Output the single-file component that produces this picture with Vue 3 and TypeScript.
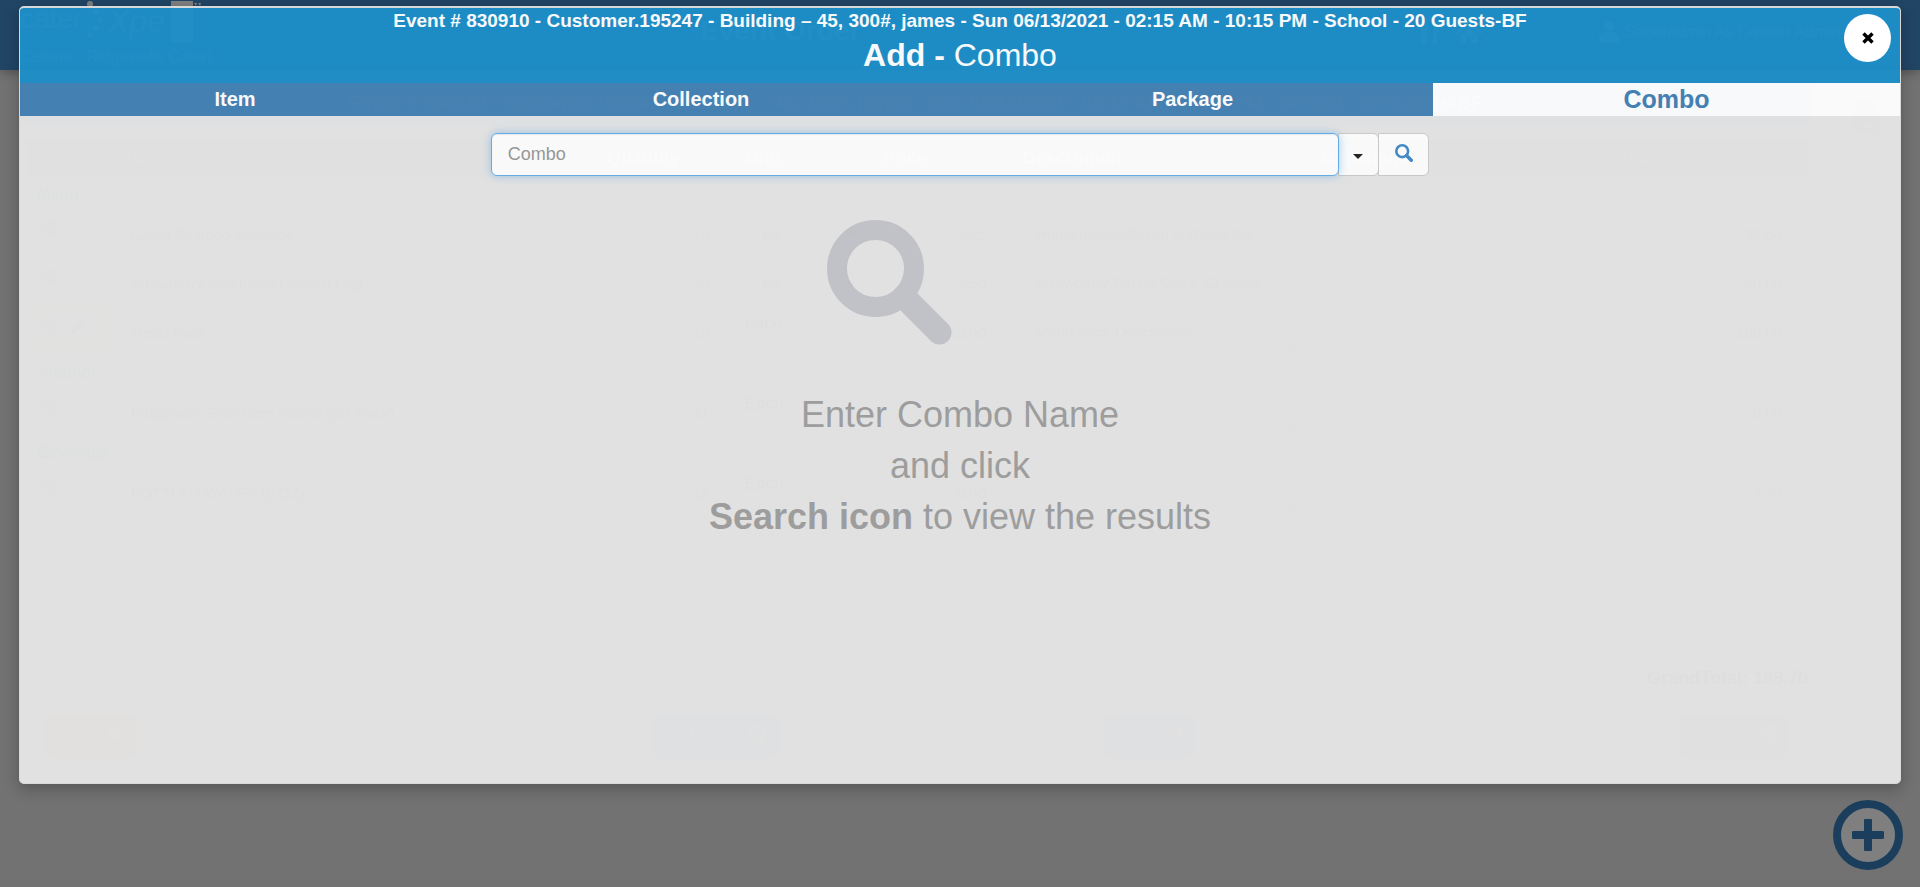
<script setup lang="ts">
import { ref } from 'vue'

interface Line {
  name: string
  qty: string
  unit: string
  select: boolean
  price: string
  description: string
  total: string
  editable: boolean
}

interface Category {
  title: string
  lines: Line[]
}

const eventTitle =
  'Event # 830910 - Customer.195247 - Building – 45, 300#, james - Sun 06/13/2021 - 02:15 AM - 10:15 PM - School - 20 Guests-BF'

const columns = ['', 'Name', 'Quantity', 'Unit', 'Price', 'Description', 'Directions', 'Total']

const categories: Category[] = [
  {
    title: 'Menu',
    lines: [
      { name: 'Cajun Seafood Sausage', qty: '10', unit: 'ea', select: true, price: '3.25', description: 'Housemade Shrimp and Scallop', total: '32.50', editable: false },
      { name: 'Strawberry Shortcake Dessert Cup', qty: '20', unit: 'ea', select: true, price: '2.50', description: 'Strawberry Panna Cotta, Crunchy', total: '50.00', editable: false },
      { name: 'Menu Pack', qty: '10', unit: 'each', select: false, price: '10.00', description: 'Menu Pack Description', total: '100.00', editable: true },
    ],
  },
  {
    title: 'Alcohol',
    lines: [
      { name: 'Ridgewells Eats Beer Promo (Six Pack)', qty: '11', unit: 'Each', select: false, price: '0.00', description: '', total: '0.00', editable: false },
    ],
  },
  {
    title: 'Beverage',
    lines: [
      { name: 'BOTTLED WATER (8 OZ)', qty: '12', unit: 'Each', select: false, price: '0.60', description: '', total: '7.20', editable: false },
    ],
  },
]

const tabs = ['Item', 'Collection', 'Package', 'Combo']
const activeTab = ref('Combo')
const query = ref('')
</script>

<template>
  <div class="screen">
    <div class="page">
      <header class="navbar">
        <div class="brand">
          <div class="logo">
            <span class="logo-cater">cater</span>
            <svg class="logo-dots" width="26" height="38" viewBox="0 0 26 38">
              <circle cx="8" cy="4" r="3" /><circle cx="14" cy="12" r="3" /><circle cx="18" cy="20" r="3" />
              <circle cx="14" cy="28" r="3" /><circle cx="8" cy="35" r="3" />
            </svg>
            <span class="logo-xpert">Xpe</span>
            <svg class="logo-card" width="32" height="42" viewBox="0 0 32 42">
              <rect y="1" width="22" height="41" /><path d="M23 3h3l-1 3zM27 3h3l-1 3z" />
            </svg>
          </div>
          <div class="caterer">Caterer : Ridgewells Cateri...</div>
        </div>
        <div class="nav-title">Event Order</div>
        <div class="nav-icons">
          <svg width="24" height="26" viewBox="0 0 24 26"><path d="M3 1h2v7h1V1h2v7h1V1h2v9l-2 2v13H5V12l-2-2zM16 1c4 1 6 5 6 12h-2v12h-4z" /></svg>
          <svg width="28" height="26" viewBox="0 0 28 26"><path d="M14 2 0 14l2 2L14 6l12 10 2-2-5-4V3h-3v4zM5 16v8h7v-6h4v6h7v-8l-9-8z" /></svg>
        </div>
        <div class="user">
          <svg width="20" height="22" viewBox="0 0 20 22"><circle cx="10" cy="6" r="5" /><path d="M0 22v-5q1-4 6-5h8q5 1 6 5v5z" /></svg>
          <span>Superadmin As Caterer Admin</span>
        </div>
      </header>

      <main class="order">
        <div class="order-head">
          <div class="order-title">{{ eventTitle }}</div>
          <button class="print" type="button" aria-label="Print">
            <svg width="30" height="30" viewBox="0 0 30 30"><path d="M4 0h18l4 4v8H4zM0 12h30v12h-4v6H4v-6H0zM8 20v6h14v-6z" fill="#aaa" fill-rule="evenodd" /></svg>
          </button>
        </div>

        <table class="lines">
          <colgroup>
            <col class="c-act" /><col class="c-name" /><col class="c-qty" /><col class="c-unit" />
            <col class="c-price" /><col class="c-desc" /><col class="c-desc" /><col class="c-total" />
          </colgroup>
          <thead>
            <tr><th v-for="c in columns" :key="c" scope="col">{{ c }}</th></tr>
          </thead>
          <tbody v-for="cat in categories" :key="cat.title">
            <tr class="category"><th colspan="8">{{ cat.title }}</th></tr>
            <tr v-for="line in cat.lines" :key="line.name" class="line">
              <td :class="{ marked: line.editable }">
                <div class="actions">
                  <button type="button" :aria-label="'Delete ' + line.name">
                    <svg width="14" height="16" viewBox="0 0 14 16" fill="none" stroke="#777"><path d="M0 3h14M4 3V1h6v2M2 4v11h10V4M5 6v7M7 6v7M9 6v7" /></svg>
                  </button>
                  <button v-if="line.editable" type="button" :aria-label="'Edit ' + line.name">
                    <svg width="16" height="16" viewBox="0 0 16 16"><path d="M0 16l1-5 9-9 4 4-9 9zM11 1l1-1h1l3 3v1l-1 1z" fill="#888" /></svg>
                  </button>
                </div>
              </td>
              <td><input type="text" :value="line.name" :aria-label="line.name + ' name'" /></td>
              <td><input class="num" type="text" :value="line.qty" :aria-label="line.name + ' quantity'" /></td>
              <td>
                <select v-if="line.select" :aria-label="line.name + ' unit'"><option>{{ line.unit }}</option></select>
                <span v-else class="unit">{{ line.unit }}</span>
              </td>
              <td><input class="num" type="text" :value="line.price" :aria-label="line.name + ' price'" /></td>
              <td><textarea rows="1" :value="line.description" :aria-label="line.name + ' description'"></textarea></td>
              <td><textarea rows="1" :aria-label="line.name + ' directions'"></textarea></td>
              <td><input class="num" type="text" :value="line.total" :aria-label="line.name + ' total'" /></td>
            </tr>
          </tbody>
        </table>

        <div class="grand">GrandTotal: 189.70</div>

        <div class="order-actions">
          <button class="btn close-btn" type="button">Close
            <svg width="16" height="16" viewBox="0 0 16 16"><path d="M3 0 8 5l5-5 3 3-5 5 5 5-3 3-5-5-5 5-3-3 5-5-5-5z" /></svg>
          </button>
          <button class="btn blue-btn" type="button">Add Items
            <svg width="18" height="18" viewBox="0 0 18 18"><path d="M9 0a9 9 0 1 0 0 18A9 9 0 0 0 9 0zM7 4h4v3h3v4h-3v3H7v-3H4V7h3z" fill-rule="evenodd" /></svg>
          </button>
          <button class="btn blue-btn" type="button">Save
            <svg width="18" height="18" viewBox="0 0 18 18"><path d="M18 0v18l-6-4-4 4-1-6-7-1zM15 4 8 12l2 2z" fill-rule="evenodd" /></svg>
          </button>
          <button class="btn green-btn" type="button">Finalize
            <svg width="18" height="18" viewBox="0 0 18 18"><path d="M9 0a9 9 0 1 0 0 18A9 9 0 0 0 9 0zM4 9l2-2 2 2 4-4 2 2-6 6z" fill-rule="evenodd" /></svg>
          </button>
        </div>
      </main>

      <button class="fab" type="button" aria-label="Add">
        <svg width="70" height="70" viewBox="0 0 70 70">
          <circle cx="35" cy="35" r="31" fill="#fff" stroke="#347cb8" stroke-width="8" />
          <path d="M32 19h6q1 0 1 1v11h10q2 0 2 1v6q0 1-2 1H39v11q0 1-1 1h-6q-1 0-1-1V39H20q-1 0-1-1v-6q0-1 1-1h11V20q0-1 1-1z" fill="#347cb8" />
        </svg>
      </button>
    </div>

    <div class="backdrop">
      <section class="dialog" role="dialog" aria-labelledby="dialog-title">
        <div class="content">
          <header class="dialog-head">
            <div class="dialog-event">{{ eventTitle }}</div>
            <h1 id="dialog-title"><strong>Add -</strong> Combo</h1>
          </header>
          <nav class="tabs" role="tablist">
            <button
              v-for="tab in tabs"
              :key="tab"
              type="button"
              role="tab"
              :aria-selected="tab === activeTab"
              :class="['tab', { active: tab === activeTab }]"
              @click="activeTab = tab"
            >{{ tab }}</button>
          </nav>
          <div class="dialog-body">
            <form class="search" @submit.prevent>
              <input v-model="query" class="search-input" type="text" placeholder="Combo" aria-label="Combo" />
              <button class="addon caret" type="button" aria-label="Search options">
                <svg width="10" height="5" viewBox="0 0 10 5"><path d="M0 0h10L5 5z" fill="#222" /></svg>
              </button>
              <button class="addon find" type="submit" aria-label="Search">
                <svg width="18" height="18" viewBox="0 0 125 125" fill="none" stroke="#428bca">
                  <circle cx="50" cy="50" r="41" stroke-width="18" /><path d="M80 80 113 113" stroke-width="24" stroke-linecap="round" />
                </svg>
              </button>
            </form>
            <div class="hint">
              <svg width="125" height="125" viewBox="0 0 125 125" fill="none" stroke="#c4c5ca">
                <circle cx="48.5" cy="48.5" r="38.5" stroke-width="20" /><path d="M77 77 112.500 112.500" stroke-width="24" stroke-linecap="round" />
              </svg>
              <p>Enter Combo Name<br />and click<br /><strong>Search icon</strong> to view the results</p>
            </div>
          </div>
        </div>
        <button class="dismiss" type="button" aria-label="Close dialog">
          <svg width="12" height="12" viewBox="0 0 12 12" stroke="#000" stroke-width="3.400"><path d="M1.500 1.500l9 9M10.500 1.500l-9 9" /></svg>
        </button>
      </section>
    </div>
  </div>
</template>

<style>
body {
  margin: 0;
  background: #e4e4e4;
}
</style>

<style scoped>
.screen,
.screen button,
.screen input,
.screen select,
.screen textarea {
  box-sizing: border-box;
  font-family: "Liberation Sans", Arial, sans-serif;
}

.screen {
  position: relative;
  min-height: 100vh;
  color: #333;
}

button {
  padding: 0;
  border: 0;
  cursor: pointer;
}

svg {
  display: block;
}

/* Order page */
.page {
  min-height: 100vh;
  background: #e4e4e4;
}

.navbar {
  display: flex;
  align-items: flex-start;
  height: 70px;
  padding: 0 80px 0 20px;
  box-sizing: border-box;
  background: #428bca;
  box-shadow: 0 2px 10px rgba(0, 0, 0, 0.3);
  color: #fff;
}

.navbar svg {
  fill: #fff;
}

.brand {
  width: 680px;
}

.logo {
  display: flex;
  align-items: flex-start;
  height: 46px;
  overflow: hidden;
}

.logo-cater {
  width: 62px;
  font-size: 28px;
  line-height: 38px;
}

.logo-xpert {
  width: 63px;
  font-size: 32px;
  font-style: italic;
  line-height: 42px;
}

.caterer {
  font-size: 16px;
  line-height: 22px;
}

.nav-title {
  flex: 1;
  font-size: 28px;
  font-weight: bold;
  line-height: 62px;
}

.nav-icons {
  display: flex;
  gap: 14px;
  width: 182px;
  padding-top: 19px;
}

.user {
  display: flex;
  gap: 6px;
  padding-top: 20px;
  font-size: 16px;
  line-height: 24px;
}

.order {
  padding: 13px 20px 0;
}

.order-head {
  display: flex;
  gap: 20px;
  height: 42px;
}

.order-title {
  flex: 1;
  border-radius: 6px;
  background: #428bca;
  color: #fff;
  font-size: 19px;
  font-weight: bold;
  line-height: 40px;
  text-align: center;
}

.print {
  display: grid;
  place-items: center;
  width: 68px;
  height: 68px;
  border: 1px solid #ccc;
  border-radius: 50%;
  background: #e4e4e4;
}

.lines {
  width: calc(100% - 99px);
  margin: 15px 0 0 6px;
  border-collapse: separate;
  border-spacing: 0;
  table-layout: fixed;
}

.c-act { width: 80px; }
.c-name { width: 489px; }
.c-qty { width: 139px; }
.c-unit { width: 137px; }
.c-price { width: 140px; }
.c-desc { width: 298px; }
.c-total { width: 200px; }

th {
  padding: 0 11px;
  font-size: 16px;
  text-align: left;
}

thead th {
  height: 37px;
  border-left: 1px solid #bbb;
  background: #a4a4a4;
  color: #fff;
  box-sizing: border-box;
  font-size: 18px;
}

.category th {
  height: 31px;
  padding-top: 4px;
  box-sizing: border-box;
  color: #2b8f8f;
}

.line td {
  height: 49px;
  box-sizing: border-box;
  padding: 5px 11px 1px;
  border-bottom: 1px solid #ddd;
  font-size: 16px;
  vertical-align: top;
}

.line .marked {
  background: #e6df78;
}

.actions {
  display: flex;
  gap: 2px;
}

.actions button {
  display: grid;
  place-items: center;
  width: 27px;
  height: 26px;
  margin-top: 2px;
  border-right: 1px solid #ccc;
  background: #e4e4e4;
}

.line input,
.line select,
.line textarea {
  display: block;
  width: 100%;
  height: 42px;
  padding: 0 13px;
  border: 1px solid #ccc;
  border-radius: 4px;
  background: #e4e4e4;
  color: #555;
  font-size: 15px;
}

.line textarea {
  padding-top: 11px;
  overflow: hidden;
}

.line .num {
  text-align: right;
}

.unit {
  font-size: 17px;
  line-height: 26px;
}

.grand {
  padding-right: 92px;
  margin-top: 152px;
  font-size: 18px;
  font-weight: bold;
  line-height: 22px;
  text-align: right;
}

.order-actions {
  display: grid;
  grid-template-columns: 607fr 455fr 575fr 110fr;
  justify-items: start;
  padding: 27px 110px 0 23px;
}

.btn {
  display: flex;
  align-items: center;
  gap: 6px;
  height: 40px;
  padding: 0 12px 4px;
  border-radius: 6px;
  color: #fff;
  font-size: 18px;
  box-shadow: 0 14px 10px -8px rgba(0, 0, 0, 0.2);
}

.btn svg {
  fill: #fff;
}

.close-btn { background: #f0ad4e; }
.blue-btn { background: #428bca; }
.green-btn { background: #5cb85c; }

.fab {
  position: absolute;
  right: 17px;
  bottom: 17px;
  border-radius: 50%;
  background: none;
}

/* Dialog */
.backdrop {
  position: absolute;
  inset: 0;
  background: rgba(0, 0, 0, 0.5);
}

.dialog {
  position: relative;
  margin: 6px 19px 0;
}

.content {
  overflow: hidden;
  border: 1px solid #ddd;
  border-top: 2px solid #ddd;
  border-radius: 5px;
  background: #e5e5e5;
  box-shadow: 0 5px 15px rgba(0, 0, 0, 0.25);
  opacity: 0.97;
}

.dialog-head {
  padding-bottom: 6px;
  background: #1e8fc8;
  color: #fff;
  text-align: center;
}

.dialog-event {
  font-size: 19px;
  font-weight: bold;
  line-height: 25px;
}

h1 {
  margin: 0;
  font-size: 32px;
  font-weight: normal;
  line-height: 44px;
}

.tabs {
  display: grid;
  grid-template-columns: 430fr 502fr 481fr 467fr;
}

.tab {
  height: 33px;
  background: #4682b4;
  color: #fff;
  font-size: 20px;
  font-weight: bold;
}

.tab.active {
  background: #fff;
  color: #4682b4;
  font-size: 25px;
}

.dialog-body {
  min-height: calc(100vh - 220px);
  padding: 17px 20px 0;
  box-sizing: border-box;
}

.search {
  display: flex;
  width: 51%;
  height: 43px;
  margin: 0 auto;
}

.search-input {
  position: relative;
  z-index: 1;
  flex: 1;
  min-width: 0;
  padding: 0 16px;
  border: 1px solid #66afe9;
  border-radius: 6px;
  outline: none;
  background: #fff;
  color: #555;
  font-size: 18px;
  box-shadow: inset 0 1px 1px rgba(0, 0, 0, 0.08), 0 0 8px rgba(102, 175, 233, 0.6);
}

.search-input::placeholder {
  color: #999;
  opacity: 1;
}

.addon {
  display: grid;
  place-items: center;
  border: 1px solid #ccc;
  background: #fff;
}

.caret {
  width: 41px;
  margin-left: -1px;
  padding: 4px 2px 0 0;
  border-radius: 0 6px 6px 0;
}

.find {
  width: 51px;
  margin-left: -1px;
  padding-bottom: 4px;
  border-radius: 0 6px 6px 0;
}

.hint {
  display: flex;
  flex-direction: column;
  align-items: center;
  gap: 44px;
  padding-top: 44px;
}

.hint svg {
  margin-right: 142px;
}

.hint p {
  margin: 0;
  color: #9f9f9f;
  font-size: 36px;
  line-height: 51px;
  text-align: center;
}

.dismiss {
  position: absolute;
  top: 8px;
  right: 10px;
  display: grid;
  place-items: center;
  width: 47px;
  height: 48px;
  border-radius: 50%;
  background: #fff;
}
</style>
